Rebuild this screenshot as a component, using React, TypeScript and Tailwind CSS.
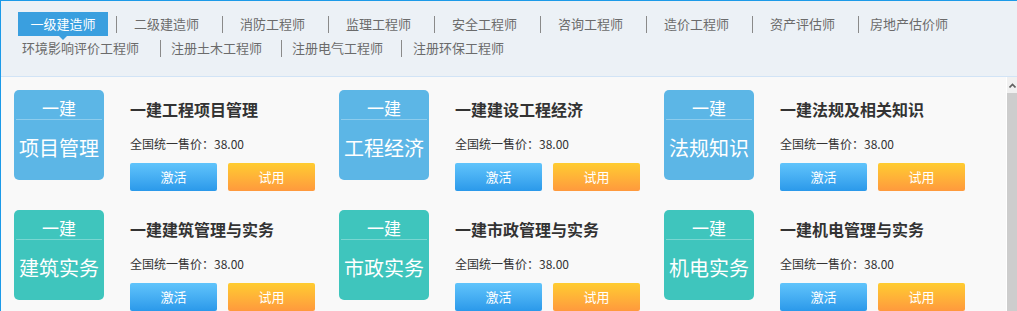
import { ReactNode } from "react"

const row1 = ["二级建造师", "消防工程师", "监理工程师", "安全工程师", "咨询工程师", "造价工程师", "资产评估师"]

const cards = [
    { top: "一建", name: "项目管理", title: "一建工程项目管理", color: "bg-[#5cb6e6]" },
    { top: "一建", name: "工程经济", title: "一建建设工程经济", color: "bg-[#5cb6e6]" },
    { top: "一建", name: "法规知识", title: "一建法规及相关知识", color: "bg-[#5cb6e6]" },
    { top: "一建", name: "建筑实务", title: "一建建筑管理与实务", color: "bg-[#3fc5bd]" },
    { top: "一建", name: "市政实务", title: "一建市政管理与实务", color: "bg-[#3fc5bd]" },
    { top: "一建", name: "机电实务", title: "一建机电管理与实务", color: "bg-[#3fc5bd]" },
]

const Sep = () => <span className="w-px h-[17px] bg-[#8a8a8a] shrink-0" />

const NavItem = ({ children, className }: { children: ReactNode; className: string }) => (
    <span className={`whitespace-nowrap text-[#6b6b6b] ${className}`}>{children}</span>
)

const Card = ({ card }: { card: (typeof cards)[number] }) => (
    <div className="flex">
        <div className={`w-[90px] h-[90px] rounded-[5px] text-white flex flex-col ${card.color}`}>
            <div className="h-[29px] pt-[8px] text-[17px] leading-[20px] text-center">{card.top}</div>
            <div className="h-px mx-[2px] bg-white/30" />
            <div className="pt-[16px] text-[20px] leading-[24px] text-center">{card.name}</div>
        </div>
        <div className="ml-[26px] flex flex-col">
            <div className="mt-[9px] h-5 text-[16px] leading-5 font-bold text-[#333]">{card.title}</div>
            <div className="mt-[17px] h-4 text-[12px] leading-4 text-[#333]">全国统一售价：38.00</div>
            <div className="mt-[11px] flex gap-[11px]">
                <button className="w-[87px] h-[28px] rounded-[2px] bg-gradient-to-b from-[#60c4fb] to-[#2a99ea] text-white text-[13px]">
                    激活
                </button>
                <button className="w-[87px] h-[28px] rounded-[2px] bg-gradient-to-b from-[#ffcc30] to-[#ff993d] text-white text-[13px]">
                    试用
                </button>
            </div>
        </div>
    </div>
)

export default function App() {
    return (
        <div className="w-[1017px] h-[311px] overflow-hidden border-t border-l border-[#1c9ae8] flex flex-col font-['Noto_Sans_CJK_SC',sans-serif]">
            {/* nav */}
            <div className="h-[76px] shrink-0 bg-[#ecf1f6] border-b border-[#d2e4f6] pt-[11px] text-[13px]">
                <div className="flex items-center h-6">
                    <span className="relative ml-[17px] mr-2 w-[90px] h-6 leading-6 text-center bg-[#3a9fdf] text-white">
                        一级建造师
                        <span className="absolute left-1/2 -translate-x-1/2 top-full border-x-[4px] border-t-[4px] border-x-transparent border-t-[#3a9fdf]" />
                    </span>
                    {row1.map((t) => (
                        <span key={t} className="flex items-center">
                            <Sep />
                            <NavItem className="pl-[17px] pr-[23px]">{t}</NavItem>
                        </span>
                    ))}
                    <Sep />
                    <NavItem className="pl-[11px]">房地产估价师</NavItem>
                </div>
                <div className="flex items-center h-6">
                    <NavItem className="ml-[21px] pr-[21px]">环境影响评价工程师</NavItem>
                    <Sep />
                    <NavItem className="pl-[10px] pr-[19px]">注册土木工程师</NavItem>
                    <Sep />
                    <NavItem className="pl-[10px] pr-[18px]">注册电气工程师</NavItem>
                    <Sep />
                    <NavItem className="pl-[11px]">注册环保工程师</NavItem>
                </div>
            </div>

            {/* body */}
            <div className="flex-1 flex min-h-0">
                <div className="flex-1 bg-[#f9f9f9] pl-[13px] pt-[13px]">
                    <div className="grid grid-cols-[325px_325px_325px] gap-y-[19px]">
                        {cards.map((c) => (
                            <Card key={c.name} card={c} />
                        ))}
                    </div>
                </div>
                <div className="w-[11px] border-l border-white flex flex-col">
                    <div className="h-[16px] bg-[#f0f0f0] flex justify-center items-center">
                        <svg width="7" height="5" viewBox="0 0 7 5">
                            <path d="M0.5 4.5 L3.5 1.5 L6.5 4.5" stroke="#606060" strokeWidth="1.6" fill="none" />
                        </svg>
                    </div>
                    <div className="flex-1 bg-[#cdcdcd]" />
                </div>
            </div>
        </div>
    )
}
